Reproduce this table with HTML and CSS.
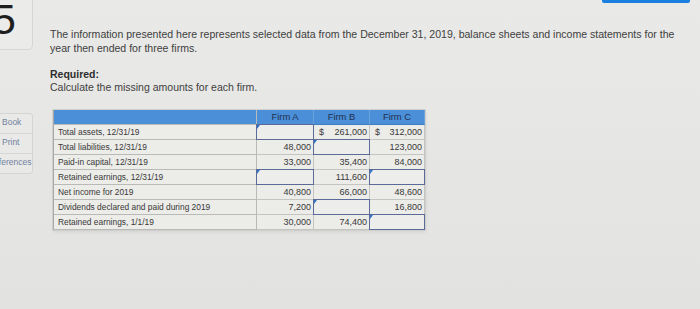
FILE: index.html
```html
<!DOCTYPE html>
<html>
<head>
<meta charset="utf-8">
<link rel="stylesheet" href="styles.css">
</head>
<body>
<div class="page">
  <aside class="rail">
    <div class="qnum"><span class="digit">5</span></div>
    <div class="tools">
      <div class="tool">Book</div>
      <div class="tool">Print</div>
      <div class="tool cut">References</div>
    </div>
  </aside>
  <main class="main">
    <div class="topbar"><div class="btn"></div></div>
    <p class="intro">The information presented here represents selected data from the December 31, 2019, balance sheets and income statements for the year then ended for three firms.</p>
    <p class="req"><b>Required:</b><br>Calculate the missing amounts for each firm.</p>
    <div class="grid">
      <div class="h lab"></div><div class="h">Firm A</div><div class="h">Firm B</div><div class="h">Firm C</div>

      <div class="lab">Total assets, 12/31/19</div>
      <div class="in"></div>
      <div class="v dol"><span>$</span><span>261,000</span></div>
      <div class="v dol"><span>$</span><span>312,000</span></div>

      <div class="lab">Total liabilities, 12/31/19</div>
      <div class="v">48,000</div>
      <div class="in"></div>
      <div class="v">123,000</div>

      <div class="lab">Paid-in capital, 12/31/19</div>
      <div class="v">33,000</div>
      <div class="v">35,400</div>
      <div class="v">84,000</div>

      <div class="lab">Retained earnings, 12/31/19</div>
      <div class="in"></div>
      <div class="v">111,600</div>
      <div class="in"></div>

      <div class="lab">Net income for 2019</div>
      <div class="v">40,800</div>
      <div class="v">66,000</div>
      <div class="v">48,600</div>

      <div class="lab">Dividends declared and paid during 2019</div>
      <div class="v">7,200</div>
      <div class="in"></div>
      <div class="v">16,800</div>

      <div class="lab">Retained earnings, 1/1/19</div>
      <div class="v">30,000</div>
      <div class="v">74,400</div>
      <div class="in"></div>
    </div>
  </main>
</div>
</body>
</html>
```

FILE: styles.css
```css
html, body {
  margin: 0;
  padding: 0;
}
body {
  width: 700px;
  height: 309px;
  overflow: hidden;
  background: linear-gradient(180deg, #e9e9e7 0%, #e5e5e3 60%, #e2e2e0 100%);
  font-family: "Liberation Sans", Arial, sans-serif;
  color: #3a3a3a;
}
.page {
  display: grid;
  grid-template-columns: 33px 1fr;
}
.rail {
  display: flex;
  flex-direction: column;
}
.qnum {
  height: 50px;
  margin-left: -10px;
  border: 1px solid #d6d6d4;
  border-top: none;
  border-radius: 0 0 5px 0;
  background: #ebebe9;
  overflow: hidden;
  box-sizing: border-box;
  width: 43px;
}
.digit {
  display: block;
  font-size: 43px;
  line-height: 43px;
  color: #1e1e1e;
  margin-left: 1px;
  margin-top: -2px;
}
.tools {
  margin-top: 63px;
  margin-left: -10px;
  width: 43px;
  box-sizing: border-box;
  border: 1px solid #d4d4d2;
  border-radius: 0 3px 3px 0;
  background: #e9e9e7;
  display: flex;
  flex-direction: column;
}
.tool {
  height: 19px;
  line-height: 17px;
  font-size: 8.5px;
  color: #71829e;
  padding-left: 11px;
  white-space: nowrap;
  overflow: hidden;
  border-bottom: 1px solid #d6d6d4;
}
.tool:last-child {
  border-bottom: none;
}
.tool.cut {
  text-indent: -14px;
}
.main {
  padding-left: 17px;
  padding-right: 10px;
}
.topbar {
  display: flex;
  justify-content: flex-end;
}
.btn {
  width: 88px;
  height: 3px;
  background: #1b7fe0;
  border-radius: 0 0 2px 2px;
}
.intro {
  margin: 24px 0 0;
  width: 632px;
  font-size: 10.55px;
  line-height: 14px;
  color: #404040;
}
.req {
  margin: 13px 0 0;
  font-size: 10.5px;
  line-height: 13px;
  color: #404040;
}
.req b {
  color: #2e2e2e;
}
.grid {
  margin: 16px 0 0 3px;
  width: 372px;
  display: grid;
  grid-template-columns: 204px 57px 56px 55px;
  grid-auto-rows: 15px;
  font-size: 8.4px;
  color: #383838;
  box-shadow: 0 0 0 1px #cfcfcd, 1px 2px 3px rgba(0,0,0,0.08);
  background: #ecece9;
}
.h {
  background: #4a8fd8;
  color: #22304f;
  font-size: 9.4px;
  text-align: center;
  line-height: 14px;
  border-right: 1px solid #6aa2dc;
  border-bottom: 1px solid #3f7cc0;
}
.h:last-child {
  border-right: none;
}
.lab {
  padding-left: 4px;
  line-height: 14px;
  border-bottom: 1px solid #b9b9b7;
  border-right: 1px solid #b9b9b7;
  border-left: 1px solid #a9a9a7;
  white-space: nowrap;
}
.v {
  text-align: right;
  padding-right: 2px;
  font-size: 9px;
  line-height: 14px;
  border-bottom: 1px solid #c4c4c2;
  border-right: 1px solid #c4c4c2;
}
.v.dol {
  display: flex;
  justify-content: space-between;
  padding-left: 5px;
}
.in {
  border: 1px solid #5b6a96;
  background: #ededeb;
  position: relative;
  margin: -1px 0 0 -1px;
}
.in::before {
  content: "";
  position: absolute;
  left: 0;
  top: 0;
  border-top: 4px solid #2f72c8;
  border-right: 3px solid transparent;
}
```
